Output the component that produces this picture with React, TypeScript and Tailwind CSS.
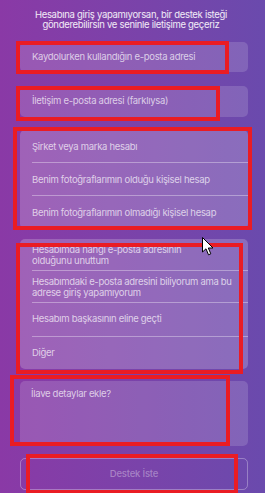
import React from "react";

const font = { fontFamily: "Inter, 'Noto Sans', sans-serif" };

function Row({ children, last, two }: { children: React.ReactNode; last?: boolean; two?: boolean }) {
  return (
    <div className={`ml-[12px] flex items-center ${two ? "h-[32px]" : "h-[33px]"} ${last ? "" : "border-b border-white/35"}`}>
      <span className="text-[9.5px] leading-[11px] tracking-[-0.3px] text-white/70">{children}</span>
    </div>
  );
}

export default function App() {
  return (
    <div className="relative h-[493px] w-[265px] overflow-hidden bg-gradient-to-r from-[#8a39a6] to-[#6a4aad]" style={font}>
      <div className="flex flex-col pl-[20px] pr-[17px] pt-[10px]">
        <div className="-ml-[20px] -mr-[17px] pr-[3px] text-center text-[9.5px] leading-[10px] tracking-[-0.3px] text-white/90">
          <div>Hesabına giriş yapamıyorsan, bir destek isteği</div>
          <div>gönderebilirsin ve seninle iletişime geçeriz</div>
        </div>
        <div className="mt-[12px] flex h-[30px] items-center rounded-[5px] bg-white/15 pl-[12px] text-[9.5px] tracking-[-0.3px] text-white/70">
          Kaydolurken kullandığın e-posta adresi
        </div>
        <div className="mt-[14px] flex h-[31px] items-center rounded-[5px] bg-white/15 pl-[12px] text-[9.5px] tracking-[-0.3px] text-white/70">
          İletişim e-posta adresi (farklıysa)
        </div>
        <div className="mt-[13px] rounded-[5px] bg-white/20">
          <Row>Şirket veya marka hesabı</Row>
          <Row>Benim fotoğraflarımın olduğu kişisel hesap</Row>
          <Row last>Benim fotoğraflarımın olmadığı kişisel hesap</Row>
        </div>
        <div className="mt-[10px] rounded-[5px] bg-white/20">
          <Row two>
            Hesabımda hangi e-posta adresinin
            <br />
            olduğunu unuttum
          </Row>
          <Row two>
            Hesabımdaki e-posta adresini biliyorum ama bu
            <br />
            adrese giriş yapamıyorum
          </Row>
          <div className="ml-[12px] flex h-[34px] items-center border-b border-white/35">
            <span className="text-[9.5px] tracking-[-0.3px] text-white/70">Hesabım başkasının eline geçti</span>
          </div>
          <div className="ml-[12px] flex h-[32px] items-center">
            <span className="text-[9.5px] tracking-[-0.3px] text-white/70">Diğer</span>
          </div>
        </div>
        <div className="mt-[12px] h-[65px] rounded-[5px] bg-white/15 pl-[11px] pt-[6px] text-[9.5px] tracking-[-0.3px] text-white/70">
          İlave detaylar ekle?
        </div>
        <div className="mt-[12px] flex h-[32px] items-center justify-center rounded-[5px] border border-white/30 text-[9.5px] font-medium tracking-[-0.2px] text-white/35">
          Destek İste
        </div>
      </div>

      {/* annotation boxes */}
      <div className="absolute left-[16px] top-[41px] h-[33px] w-[213px] border-[4px] border-[#ea1c24]" />
      <div className="absolute left-[16px] top-[86px] h-[35px] w-[204px] border-[4px] border-[#ea1c24]" />
      <div className="absolute left-[13px] top-[127px] h-[103px] w-[239px] border-[4px] border-[#ea1c24]" />
      <div className="absolute left-[16px] top-[243px] h-[131px] w-[227px] border-[4px] border-[#ea1c24]" />
      <div className="absolute left-[10px] top-[375px] h-[71px] w-[220px] border-[4px] border-[#ea1c24]" />
      <div className="absolute left-[26px] top-[454px] h-[40px] w-[212px] border-[4px] border-[#ea1c24]" />

      {/* cursor */}
      <svg className="absolute left-[202px] top-[237px]" width="12" height="19" viewBox="0 0 12 19">
        <path d="M0.5 0.5 L0.5 15 L4 11.8 L6.5 17.8 L8.8 16.8 L6.3 11 L11 11 Z" fill="#fff" stroke="#000" strokeWidth="1" strokeLinejoin="round" />
      </svg>
    </div>
  );
}
